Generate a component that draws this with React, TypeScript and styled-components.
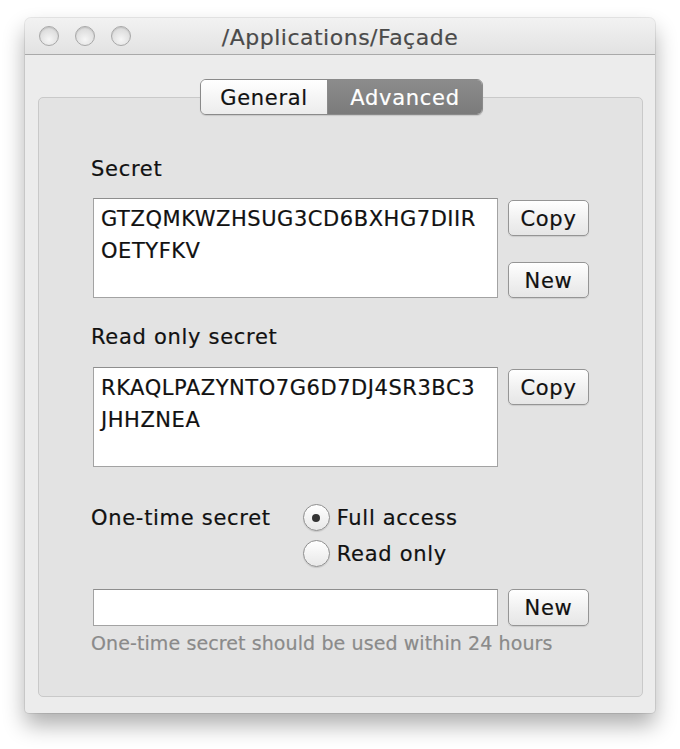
import React from "react";
import styled, { createGlobalStyle } from "styled-components";

const Global = createGlobalStyle`
  html, body { margin: 0; padding: 0; background: #ffffff; }
  body { font-family: "DejaVu Sans", "Liberation Sans", sans-serif; -webkit-text-stroke: 0.2px currentColor; }
  * { box-sizing: border-box; }
`;

const Page = styled.div`
  width: 680px;
  height: 749px;
  padding: 18px 0 0 25px;
`;

const Window = styled.div`
  width: 630px;
  height: 695px;
  background: #ececec;
  border-radius: 6px 6px 4px 4px;
  box-shadow: 0 0 0 1px rgba(0, 0, 0, 0.08), 0 12px 22px rgba(0, 0, 0, 0.32);
  display: flex;
  flex-direction: column;
`;

const TitleBar = styled.div`
  height: 37px;
  flex: none;
  display: flex;
  align-items: center;
  position: relative;
  background: linear-gradient(#f2f2f2, #e2e2e2);
  border-bottom: 1px solid #a9a9a9;
  border-radius: 6px 6px 0 0;
  padding-left: 14px;
  gap: 16px;
`;

const Light = styled.span`
  width: 20px;
  height: 20px;
  border-radius: 50%;
  border: 1px solid #a8a8a8;
  background: radial-gradient(circle at 50% 70%, #f6f6f6, #dcdcdc 70%);
  box-shadow: inset 0 1px 1px rgba(0, 0, 0, 0.12);
`;

const Title = styled.div`
  position: absolute;
  left: 0;
  right: 0;
  top: 2px;
  bottom: 0;
  display: flex;
  align-items: center;
  justify-content: center;
  font-size: 22px;
  letter-spacing: 0.5px;
  color: #4a4a4a;
  pointer-events: none;
`;

const Body = styled.div`
  flex: 1;
  display: flex;
  flex-direction: column;
  padding: 24px 12px 16px 13px;
`;

const TabRow = styled.div`
  display: flex;
  justify-content: center;
  margin-bottom: -18px;
  position: relative;
  z-index: 1;
  padding-left: 2px;
`;

const Segmented = styled.div`
  display: flex;
  height: 36px;
  border: 1px solid #8a8a8a;
  border-radius: 6px;
  overflow: hidden;
  box-shadow: 0 1px 1px rgba(0, 0, 0, 0.12);
`;

const Segment = styled.div<{ $active?: boolean; $w: number }>`
  width: ${(p) => p.$w}px;
  display: flex;
  align-items: center;
  justify-content: center;
  padding-top: 1px;
  font-size: 21px;
  letter-spacing: 0.7px;
  color: ${(p) => (p.$active ? "#ffffff" : "#111111")};
  background: ${(p) =>
    p.$active ? "linear-gradient(#8c8c8c, #7b7b7b)" : "linear-gradient(#ffffff, #ececec)"};
  & + & {
    border-left: 1px solid #8a8a8a;
  }
`;

const Group = styled.div`
  flex: 1;
  background: #e3e3e3;
  border: 1px solid #c9c9c9;
  border-radius: 5px;
  padding: 58px 52px 0 52px;
  display: flex;
  flex-direction: column;
`;

const Label = styled.div<{ $top?: number }>`
  font-size: 21px;
  letter-spacing: 0.7px;
  line-height: 26px;
  color: #111;
  margin-top: ${(p) => p.$top ?? 0}px;
`;

const FieldRow = styled.div<{ $top?: number }>`
  display: flex;
  gap: 10px;
  margin-top: ${(p) => p.$top ?? 0}px;
  padding-left: 2px;
`;

const TextBox = styled.div<{ $h: number }>`
  width: 405px;
  height: ${(p) => p.$h}px;
  background: #ffffff;
  border: 1px solid #a3a3a3;
  border-top-color: #8e8e8e;
  padding: 4px 4px 0 7px;
  font-size: 21px;
  letter-spacing: 0.55px;
  line-height: 32px;
  color: #111;
  white-space: pre;
  overflow: hidden;
`;

const ButtonCol = styled.div`
  display: flex;
  flex-direction: column;
  gap: 26px;
  padding-top: 2px;
`;

const Button = styled.div<{ $h?: number }>`
  width: 81px;
  height: ${(p) => p.$h ?? 36}px;
  border: 1px solid #959595;
  border-radius: 5px;
  background: linear-gradient(#ffffff, #f0f0f0 55%, #e6e6e6);
  box-shadow: 0 1px 1px rgba(0, 0, 0, 0.1);
  display: flex;
  align-items: center;
  justify-content: center;
  padding-top: 1px;
  font-size: 21px;
  letter-spacing: 0.7px;
  color: #111;
`;

const OneTimeRow = styled.div`
  display: flex;
  margin-top: 38px;
  gap: 30px;
`;

const RadioGroup = styled.div`
  display: flex;
  flex-direction: column;
  gap: 9px;
  margin-top: -1px;
  padding-left: 2px;
`;

const RadioItem = styled.div`
  display: flex;
  align-items: center;
  gap: 7px;
  font-size: 21px;
  letter-spacing: 0.7px;
  line-height: 26px;
  color: #111;
`;

const RadioCircle = styled.span<{ $checked?: boolean }>`
  width: 27px;
  height: 27px;
  border-radius: 50%;
  border: 1px solid #8f8f8f;
  background: linear-gradient(#ffffff, #e8e8e8);
  box-shadow: 0 1px 1px rgba(0, 0, 0, 0.12);
  display: flex;
  align-items: center;
  justify-content: center;
  &::after {
    content: "";
    width: 8px;
    height: 8px;
    border-radius: 50%;
    background: ${(p) => (p.$checked ? "#333" : "transparent")};
  }
`;

const Hint = styled.div`
  font-size: 19px;
  letter-spacing: 0.1px;
  line-height: 22px;
  color: #8a8a8a;
  margin-top: 6px;
`;

export default function App() {
  return (
    <Page>
      <Global />
      <Window>
        <TitleBar>
          <Light />
          <Light />
          <Light />
          <Title>/Applications/Façade</Title>
        </TitleBar>
        <Body>
          <TabRow>
            <Segmented>
              <Segment $w={126}>General</Segment>
              <Segment $w={155} $active>
                Advanced
              </Segment>
            </Segmented>
          </TabRow>
          <Group>
            <Label>Secret</Label>
            <FieldRow $top={16}>
              <TextBox $h={100}>{"GTZQMKWZHSUG3CD6BXHG7DIIR\nOETYFKV"}</TextBox>
              <ButtonCol>
                <Button>Copy</Button>
                <Button>New</Button>
              </ButtonCol>
            </FieldRow>
            <Label $top={26}>Read only secret</Label>
            <FieldRow $top={17}>
              <TextBox $h={100}>{"RKAQLPAZYNTO7G6D7DJ4SR3BC3\nJHHZNEA"}</TextBox>
              <ButtonCol>
                <Button>Copy</Button>
              </ButtonCol>
            </FieldRow>
            <OneTimeRow>
              <Label>One-time secret</Label>
              <RadioGroup>
                <RadioItem>
                  <RadioCircle $checked />
                  Full access
                </RadioItem>
                <RadioItem>
                  <RadioCircle />
                  Read only
                </RadioItem>
              </RadioGroup>
            </OneTimeRow>
            <FieldRow $top={22}>
              <TextBox $h={37} />
              <Button $h={37}>New</Button>
            </FieldRow>
            <Hint>One-time secret should be used within 24 hours</Hint>
          </Group>
        </Body>
      </Window>
    </Page>
  );
}
